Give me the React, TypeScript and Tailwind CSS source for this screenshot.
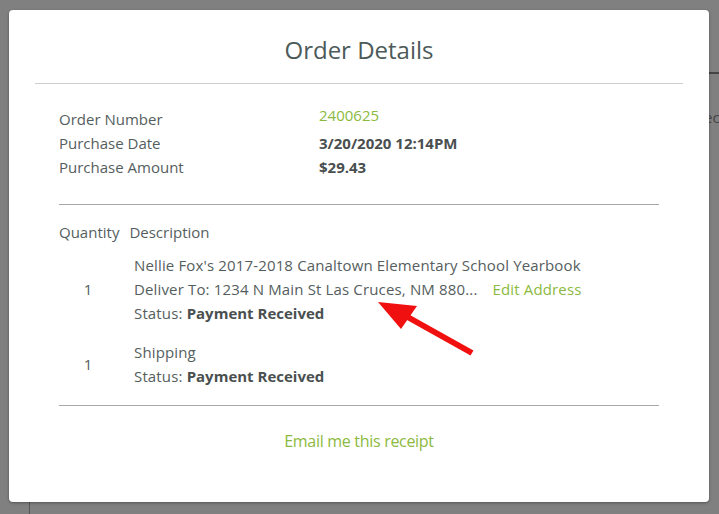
export default function App() {
  return (
    <div
      className="relative w-[719px] h-[514px] overflow-hidden bg-[#808080]"
      style={{ fontFamily: '"Open Sans", "Liberation Sans", sans-serif' }}
    >
      {/* page behind the overlay */}
      <div className="absolute left-[709px] top-[72px] w-[10px] h-[2px] bg-[#444]" />
      <div className="absolute left-[704px] top-[106px] text-[15px] text-[#444]">ec</div>
      <div className="absolute left-[29px] top-[500px] w-[1px] h-[14px] bg-[#555]" />

      {/* modal */}
      <div className="absolute left-[9px] top-[10px] w-[700px] h-[492px] bg-white rounded-[4px] shadow-[0_1px_3px_rgba(0,0,0,0.35)]">
        <div className="px-[26px]">
          <h1 className="h-[73px] pt-[22px] text-center text-[24px] leading-[36px] text-[#4c5a5a]">
            Order Details
          </h1>
          <div className="h-[1px] bg-[#cfcfcf]" />
        </div>

        <div className="px-[50px] text-[15px] text-[#555e5e]">
          <div className="pt-[23px] pb-[25px] leading-[24px]">
            <div className="flex">
              <div className="w-[260px]">Order Number</div>
              <div className="-mt-[4px] text-[#8cba40]">2400625</div>
            </div>
            <div className="flex">
              <div className="w-[260px]">Purchase Date</div>
              <div className="font-bold text-[#4a4f4f]">3/20/2020 12:14PM</div>
            </div>
            <div className="flex">
              <div className="w-[260px]">Purchase Amount</div>
              <div className="font-bold text-[#4a4f4f]">$29.43</div>
            </div>
          </div>
          <div className="h-[1px] bg-[#a8a8a8]" />

          <div className="pt-[15px] leading-[24px]">
            <div className="flex gap-[10px]">
              <span>Quantity</span>
              <span>Description</span>
            </div>

            <div className="flex items-center mt-[9px]">
              <div className="w-[58px] text-center">1</div>
              <div className="ml-[17px] tracking-[0.15px]">
                <div>Nellie Fox's 2017-2018 Canaltown Elementary School Yearbook</div>
                <div className="flex">
                  <span>Deliver To: 1234 N Main St Las Cruces, NM 880...</span>
                  <span className="ml-[15px] text-[#8cba40]">Edit Address</span>
                </div>
                <div>
                  Status: <span className="font-bold text-[#4a4f4f] tracking-normal">Payment Received</span>
                </div>
              </div>
            </div>

            <div className="flex items-center mt-[15px]">
              <div className="w-[58px] text-center">1</div>
              <div className="ml-[17px] tracking-[0.15px]">
                <div>Shipping</div>
                <div>
                  Status: <span className="font-bold text-[#4a4f4f] tracking-normal">Payment Received</span>
                </div>
              </div>
            </div>
          </div>

          <div className="mt-[17px] h-[1px] bg-[#a8a8a8]" />

          <div className="pt-[23px] text-center text-[16px] leading-[24px] text-[#8cba40] tracking-[-0.3px]">
            Email me this receipt
          </div>
        </div>
      </div>

      {/* red annotation arrow */}
      <svg className="absolute left-0 top-0 pointer-events-none" width="719" height="514">
        <line x1="472" y1="353" x2="404" y2="315" stroke="#f01010" strokeWidth="6" />
        <polygon points="378,302 417,306 401,329" fill="#f01010" />
      </svg>
    </div>
  )
}
